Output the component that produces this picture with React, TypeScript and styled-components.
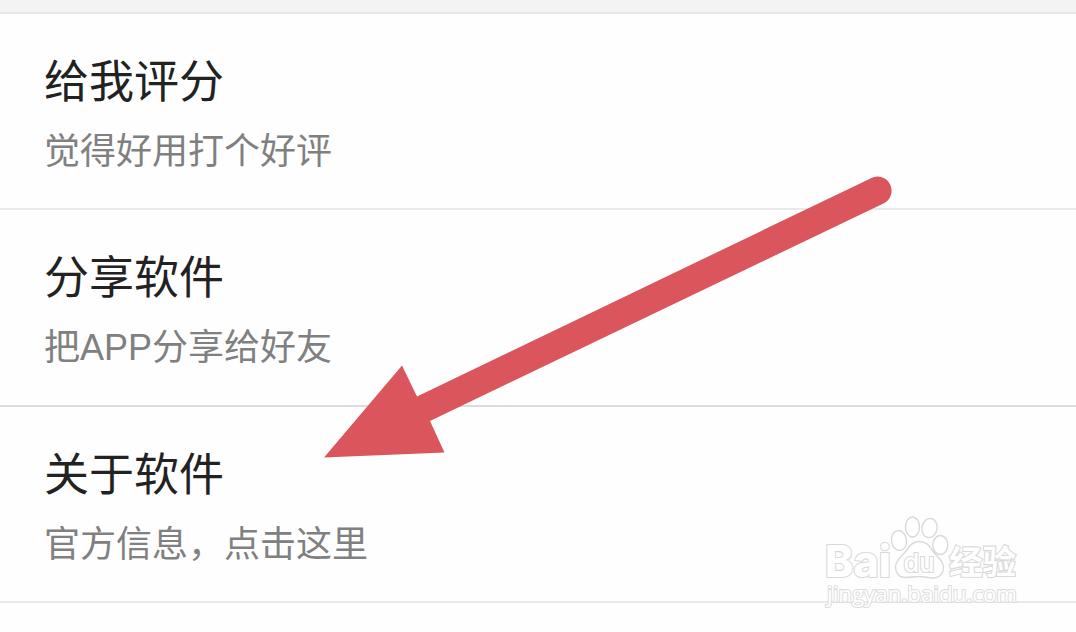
import React from 'react';
import styled, { createGlobalStyle } from 'styled-components';

const GlobalStyle = createGlobalStyle`
  * {
    box-sizing: border-box;
  }

  body {
    margin: 0;
    background: #fefefe;
    font-family: "Liberation Sans", "Noto Sans CJK SC", sans-serif;
    overflow: hidden;
  }
`;

const items = [
  { title: '给我评分', desc: '觉得好用打个好评', height: 196, line: '#e8e8e8' },
  { title: '分享软件', desc: '把APP分享给好友', height: 197, line: '#dcdcdc' },
  { title: '关于软件', desc: '官方信息，点击这里', height: 196, line: '#e9e9e9' },
];

const App = () => {
  return (
    <Page>
      <GlobalStyle />
      <TopBar />
      <List>
        {items.map((item) => (
          <Item key={item.title} $height={item.height} $line={item.line}>
            <Title>{item.title}</Title>
            <Desc>{item.desc}</Desc>
          </Item>
        ))}
      </List>
      <Arrow viewBox="0 0 1076 632">
        <path d="M324 457.5 L402 365.5 L417 396.5 L871 178.2 A14 14 0 0 1 884 203.2 L430 421 L444.5 452.5 Z" />
      </Arrow>
      <Watermark viewBox="0 0 240 120">
        <g fill="#fff" stroke="#d9d9d9" strokeWidth="1.4">
          <ellipse cx="99" cy="40.5" rx="7.5" ry="10" transform="rotate(-8 99 40.5)" />
          <ellipse cx="112.5" cy="27" rx="7" ry="10" />
          <ellipse cx="129.5" cy="28" rx="7.5" ry="9.7" transform="rotate(10 129.5 28)" />
          <ellipse cx="140.3" cy="45" rx="7.5" ry="9.5" />
          <path d="M119 41.5 C112 41.5 109 47 106 51 C102 56 95.5 60 95.5 67 C95.5 73 99 77.5 105 77.5 C110 77.5 114 76.5 119 76.5 C124 76.5 128 78 133 78 C140 78 143.5 73 143.5 67 C143.5 60 136 56 132 50 C129 45 126 41.5 119 41.5 Z" />
        </g>
        <Brand x="25" y="76.5" fontSize="44" textLength="66" lengthAdjust="spacingAndGlyphs" $weight={800}>Bai</Brand>
        <Brand x="103.5" y="72" fontSize="26" textLength="31" lengthAdjust="spacingAndGlyphs" $weight={500}>du</Brand>
        <Brand x="149" y="74" fontSize="33" textLength="67" lengthAdjust="spacingAndGlyphs" $weight={700}>经验</Brand>
        <Site x="27" y="102" fontSize="22" textLength="190" lengthAdjust="spacingAndGlyphs">jingyan.baidu.com</Site>
      </Watermark>
    </Page>
  );
}

const Page = styled.div`
  position: relative;
  width: 1076px;
  height: 632px;
  overflow: hidden;
`;

const TopBar = styled.div`
  height: 14px;
  background: #f3f3f3;
  border-bottom: 2px solid #e6e6e6;
`;

const List = styled.div`
  display: flex;
  flex-direction: column;
`;

const Item = styled.div<{ $height: number; $line: string }>`
  display: flex;
  flex-direction: column;
  height: ${(props) => props.$height}px;
  padding: 33px 44px 0;
  border-bottom: 2px solid ${(props) => props.$line};
`;

const Title = styled.div`
  font-family: "Noto Sans CJK SC", sans-serif;
  font-size: 45px;
  line-height: 64px;
  color: #222;
`;

const Desc = styled.div`
  margin-top: 15px;
  font-size: 36px;
  line-height: 52px;
  color: #808080;
`;

const Arrow = styled.svg`
  position: absolute;
  inset: 0;
  width: 1076px;
  height: 632px;
  fill: #da565c;
`;

const Watermark = styled.svg`
  position: absolute;
  left: 800px;
  top: 500px;
  width: 240px;
  height: 120px;
`;

const Brand = styled.text<{ $weight: number }>`
  font-family: Inter, "Noto Sans CJK SC", sans-serif;
  font-weight: ${(props) => props.$weight};
  fill: #fff;
  stroke: #d9d9d9;
  stroke-width: 2.2;
  paint-order: stroke;
`;

const Site = styled.text`
  font-family: "Open Sans", sans-serif;
  font-weight: 400;
  fill: #fff;
  stroke: #dcdcdc;
  stroke-width: 2;
  paint-order: stroke;
`;

export default App;
